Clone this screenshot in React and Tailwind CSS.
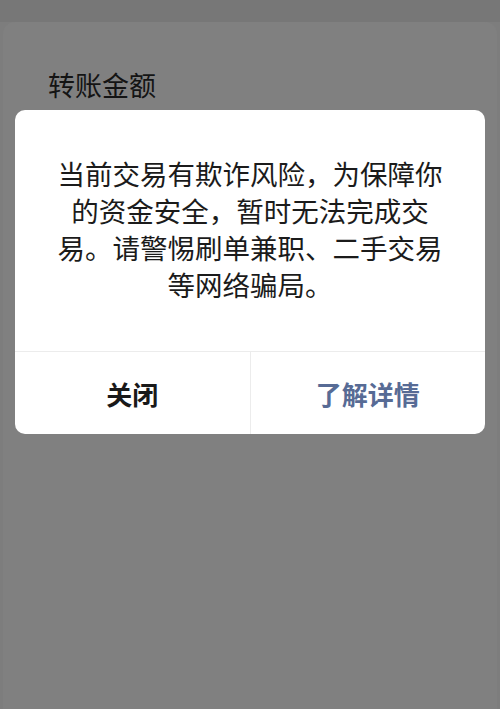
const App = () => {
  return (
    <div className="relative w-[500px] h-[709px] overflow-hidden bg-[#7d7d7d] font-['Noto_Sans_CJK_SC',sans-serif]">
      {/* dimmed page behind the dialog */}
      <div className="h-[22px] bg-[#777777]" />
      <div className="mx-[3px] h-[687px] rounded-t-[12px] bg-[#808080] pl-[45px] pt-[47px]">
        <p className="text-[27px] leading-[32px] text-[#141414]">转账金额</p>
      </div>

      {/* alert dialog */}
      <div className="absolute left-[15px] top-[110px] w-[470px] h-[324px] rounded-[10px] bg-white flex flex-col">
        <div className="h-[242px] px-[40px] pt-[45px] border-b border-[#ececec]">
          <p className="text-center text-[27.5px] leading-[37px] text-[#1b1b1b]">
            当前交易有欺诈风险，为保障你的资金安全，暂时无法完成交易。请警惕刷单兼职、二手交易等网络骗局。
          </p>
        </div>
        <div className="flex flex-1">
          <button className="flex-1 flex items-center justify-center text-[26px] font-bold text-[#191919] border-r border-[#ececec]">
            关闭
          </button>
          <button className="flex-1 flex items-center justify-center text-[26px] font-bold text-[#576b95]">
            了解详情
          </button>
        </div>
      </div>
    </div>
  )
}

export default App
